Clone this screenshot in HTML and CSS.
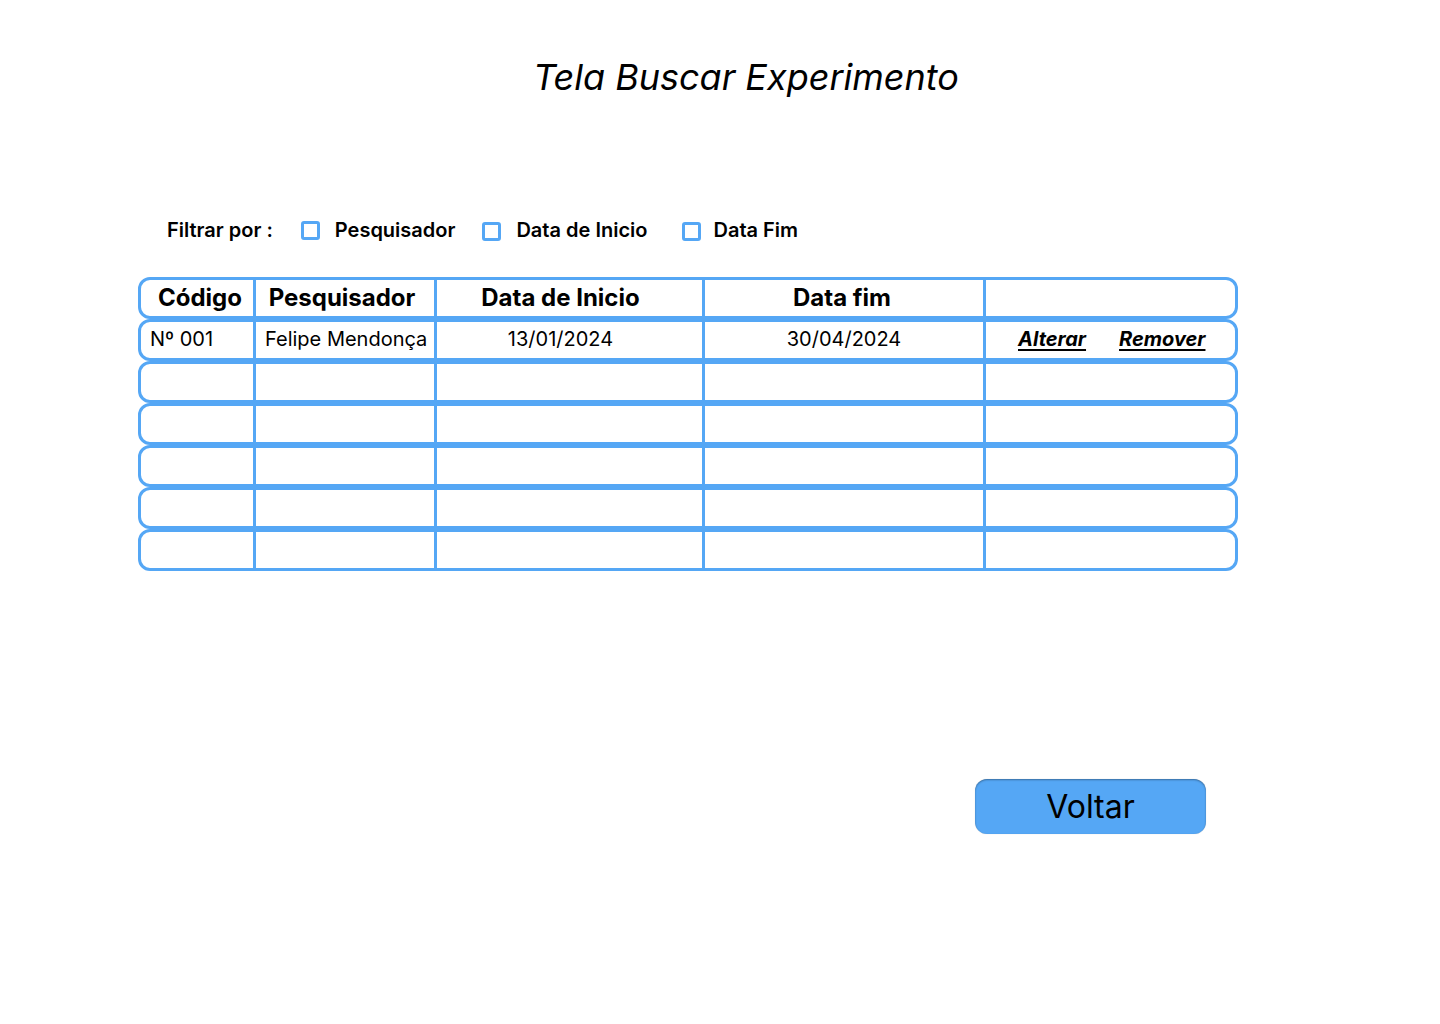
FILE: index.html
```html
<!DOCTYPE html>
<html lang="pt-BR">
<head>
<meta charset="utf-8">
<title>Tela Buscar Experimento</title>
<link rel="stylesheet" href="styles.css">
</head>
<body>
<main class="page">
  <h1 class="title">Tela Buscar Experimento</h1>

  <div class="filters">
    <span class="filters-label">Filtrar por :</span>
    <label class="opt opt-1"><span class="box"></span><span>Pesquisador</span></label>
    <label class="opt opt-2"><span class="box low"></span><span>Data de Inicio</span></label>
    <label class="opt opt-3"><span class="box low"></span><span>Data Fim</span></label>
  </div>

  <div class="table">
    <div class="row head">
      <div class="cell c1">Código</div>
      <div class="cell c2">Pesquisador</div>
      <div class="cell c3">Data de Inicio</div>
      <div class="cell c4">Data fim</div>
      <div class="cell c5"></div>
    </div>
    <div class="row">
      <div class="cell c1 left">Nº 001</div>
      <div class="cell c2 left">Felipe Mendonça</div>
      <div class="cell c3">13/01/2024</div>
      <div class="cell c4">30/04/2024</div>
      <div class="cell c5 links"><a class="link">Alterar</a><a class="link">Remover</a></div>
    </div>
    <div class="row"><div class="cell c1"></div><div class="cell c2"></div><div class="cell c3"></div><div class="cell c4"></div><div class="cell c5"></div></div>
    <div class="row"><div class="cell c1"></div><div class="cell c2"></div><div class="cell c3"></div><div class="cell c4"></div><div class="cell c5"></div></div>
    <div class="row"><div class="cell c1"></div><div class="cell c2"></div><div class="cell c3"></div><div class="cell c4"></div><div class="cell c5"></div></div>
    <div class="row"><div class="cell c1"></div><div class="cell c2"></div><div class="cell c3"></div><div class="cell c4"></div><div class="cell c5"></div></div>
    <div class="row"><div class="cell c1"></div><div class="cell c2"></div><div class="cell c3"></div><div class="cell c4"></div><div class="cell c5"></div></div>
  </div>

  <div class="actions">
    <button class="btn">Voltar</button>
  </div>
</main>
</body>
</html>
```

FILE: styles.css
```css
html, body {
  margin: 0;
  padding: 0;
  background: #ffffff;
}

body {
  font-family: Inter, "Noto Sans", "Liberation Sans", sans-serif;
  color: #000;
}

.page {
  width: 1440px;
  min-height: 1024px;
  padding-top: 55px;
  box-sizing: border-box;
}

.title {
  margin: 0;
  padding-left: 533px;
  font-size: 36px;
  line-height: 44px;
  font-style: italic;
  font-weight: 400;
}

.filters {
  margin-top: 119px;
  padding-left: 167px;
  display: flex;
  align-items: center;
  height: 24px;
  font-size: 20px;
  font-weight: 600;
}

.opt {
  display: flex;
  align-items: center;
  gap: 15px;
}

.opt-1 { margin-left: 28px; }
.opt-2 { margin-left: 27px; }
.opt-3 { margin-left: 35px; gap: 12px; }

.box {
  width: 19px;
  height: 19px;
  box-sizing: border-box;
  border: 3px solid #55a7f5;
  border-radius: 3px;
  background: #fff;
}

.box.low {
  margin-top: 3px;
}

.table {
  margin-top: 35px;
  margin-left: 138px;
  width: 1100px;
  display: flex;
  flex-direction: column;
}

.row {
  height: 42px;
  box-sizing: border-box;
  border: 3px solid #55a7f5;
  border-radius: 12px;
  display: grid;
  grid-template-columns: 112px 181px 268px 281px 1fr;
}

.cell {
  display: flex;
  align-items: center;
  justify-content: center;
  font-size: 20px;
  font-weight: 400;
  box-sizing: border-box;
  white-space: nowrap;
  padding-bottom: 2px;
}

.c2, .c3, .c4, .c5 {
  border-left: 3px solid #55a7f5;
}

.c3 {
  padding-right: 18px;
}

.head .cell {
  font-size: 24px;
  font-weight: 700;
}

.head .c1 {
  padding-left: 6px;
}

.head .c2 {
  padding-right: 6px;
}

.head .c4 {
  padding-right: 4px;
}

.cell.left {
  justify-content: flex-start;
  padding-left: 9px;
}

.links {
  justify-content: flex-start;
  padding-left: 32px;
  gap: 33px;
}

.link {
  font-weight: 700;
  font-style: italic;
  text-decoration: underline;
  text-underline-offset: 3px;
  text-decoration-thickness: 1.5px;
  color: #000;
}

.actions {
  margin-top: 208px;
  padding-left: 975px;
}

.btn {
  width: 231px;
  height: 55px;
  border: none;
  border-radius: 12px;
  background: #55a7f5;
  box-shadow: inset 0 1px 2px rgba(0, 0, 0, 0.35), 0 0 1px rgba(0, 0, 0, 0.2);
  font-family: Inter, "Noto Sans", "Liberation Sans", sans-serif;
  font-size: 32px;
  font-weight: 400;
  color: #000;
  padding: 0;
  cursor: pointer;
}
```
